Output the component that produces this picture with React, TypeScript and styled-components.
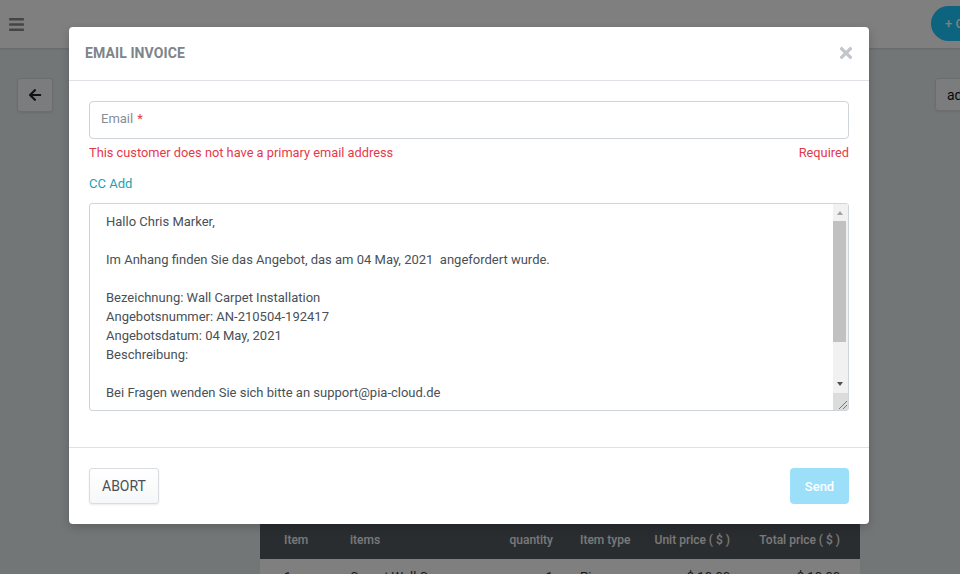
import styled, { createGlobalStyle } from "styled-components";
import { FaArrowLeft, FaBars, FaTimes } from "react-icons/fa";

const GlobalStyle = createGlobalStyle`
  html, body {
    margin: 0;
    padding: 0;
  }
  body {
    font-family: Roboto, "Liberation Sans", Arial, sans-serif;
    background: #e6ecee;
  }
  * {
    box-sizing: border-box;
  }
`;

const Page = styled.div`
  position: relative;
  width: 960px;
  height: 574px;
  overflow: hidden;
  background: #e6ecee;
`;

const TopBar = styled.header`
  display: flex;
  align-items: center;
  justify-content: space-between;
  height: 48px;
  padding: 0 0 0 8px;
  background: #ffffff;
  box-shadow: 0 1px 2px rgba(0, 0, 0, 0.12);
  color: #8a8a8a;
  font-size: 17px;
`;

const CreateButton = styled.button`
  height: 35px;
  width: 120px;
  margin-right: -91px;
  margin-top: -1px;
  border: none;
  border-radius: 18px;
  background: #1ac9ff;
  color: #fff;
  font-family: inherit;
  font-size: 13px;
  font-weight: 500;
  text-align: left;
  padding-left: 14px;
`;

const Content = styled.div`
  display: flex;
  padding: 30px 0 0 17px;
`;

const SquareButton = styled.button`
  display: flex;
  align-items: center;
  justify-content: center;
  width: 36px;
  height: 34px;
  border: 1px solid #d6dadd;
  border-radius: 3px;
  background: #f7f9fa;
  color: #1e2327;
  font-size: 14px;
  font-family: inherit;
  box-shadow: 0 1px 2px rgba(0, 0, 0, 0.08);
  flex-shrink: 0;
`;

const AddButton = styled(SquareButton)`
  width: 110px;
  height: 33px;
  justify-content: flex-start;
  padding-left: 11px;
  font-size: 14px;
  margin-left: 75px;
  color: #111;
`;

const Main = styled.main`
  flex-shrink: 0;
  margin-left: 207px;
  width: 600px;
  padding-top: 445px;
`;

const Table = styled.table`
  width: 600px;
  table-layout: fixed;
  border-collapse: collapse;
  font-size: 12px;
`;

type CellProps = { $align?: string; $w: number; $pl?: number; $pr?: number };

const HeadCell = styled.th<CellProps>`
  width: ${(p) => p.$w}px;
  height: 36px;
  padding: 0 ${(p) => p.$pr || 0}px 2px ${(p) => p.$pl || 0}px;
  background: #545a60;
  color: #f2f2f2;
  font-weight: 500;
  text-align: ${(p) => p.$align || "left"};
  white-space: nowrap;
`;

const BodyCell = styled.td<CellProps>`
  padding: 10px ${(p) => p.$pr || 0}px 10px ${(p) => p.$pl || 0}px;
  background: #ffffff;
  color: #333;
  font-size: 13px;
  text-align: ${(p) => p.$align || "left"};
  white-space: nowrap;
  overflow: hidden;
`;

const Overlay = styled.div`
  position: absolute;
  inset: 0;
  background: rgba(0, 0, 0, 0.5);
  padding: 27px 0 0 69px;
`;

const Modal = styled.div`
  width: 800px;
  background: #fff;
  border-radius: 4px;
  box-shadow: 0 3px 10px rgba(0, 0, 0, 0.2);
`;

const ModalHeader = styled.div`
  display: flex;
  align-items: center;
  justify-content: space-between;
  height: 54px;
  padding: 0 16px 1px;
  border-bottom: 1px solid #dee2e6;
`;

const Title = styled.h5`
  margin: 0;
  font-size: 14px;
  font-weight: 700;
  color: #7d848b;
  letter-spacing: 0.1px;
`;

const CloseButton = styled.button`
  display: flex;
  padding: 0;
  margin-right: -2px;
  border: none;
  background: none;
  color: #c2c6ca;
  font-size: 18px;
`;

const ModalBody = styled.div`
  padding: 20px 20px 36px;
`;

const EmailInput = styled.div`
  display: flex;
  align-items: center;
  height: 38px;
  padding: 0 11px 3px;
  border: 1px solid #ced4da;
  border-radius: 4px;
  font-size: 13px;
  color: #868e96;
`;

const Star = styled.span`
  color: #e5394b;
  margin-left: 4px;
`;

const ErrorRow = styled.div`
  display: flex;
  justify-content: space-between;
  margin-top: 5px;
  font-size: 12.8px;
  line-height: 18px;
  color: #e5394b;
`;

const LinkText = styled.a`
  display: inline-block;
  margin-top: 13px;
  font-size: 13px;
  line-height: 18px;
  color: #17a2b8;
  text-decoration: none;
`;

const MessageWrap = styled.div`
  position: relative;
  margin-top: 10px;
`;

const Message = styled.textarea`
  display: block;
  width: 100%;
  height: 208px;
  padding: 8px 32px 8px 16px;
  border: 1px solid #ced4da;
  border-radius: 3px;
  font-family: inherit;
  font-size: 13px;
  line-height: 19px;
  color: #495057;
  resize: none;
  overflow: hidden;
  outline: none;
`;

/* drawn scrollbar laid over the textarea's right edge */
const ScrollBar = styled.div`
  position: absolute;
  top: 1px;
  right: 1px;
  bottom: 1px;
  width: 15px;
  display: flex;
  flex-direction: column;
  background: #f1f1f1;
`;

const Arrow = styled.div<{ $down?: boolean }>`
  position: relative;
  height: 17px;
  flex-shrink: 0;

  &::after {
    content: "";
    position: absolute;
    left: 4px;
    top: ${(p) => (p.$down ? "6px" : "7px")};
    border-left: 3.5px solid transparent;
    border-right: 3.5px solid transparent;
    ${(p) =>
      p.$down
        ? "border-top: 4px solid #505050;"
        : "border-bottom: 4px solid #a3a3a3;"}
  }
`;

const Track = styled.div`
  flex: 1;
`;

const Thumb = styled.div`
  width: 13px;
  height: 121px;
  background: #c1c1c1;
`;

const Corner = styled.div`
  display: flex;
  align-items: flex-end;
  justify-content: flex-end;
  height: 17px;
  flex-shrink: 0;
  background: #dcdcdc;
`;

const ModalFooter = styled.div`
  display: flex;
  justify-content: space-between;
  align-items: center;
  padding: 20px;
  border-top: 1px solid #dee2e6;
`;

const AbortButton = styled.button`
  height: 36px;
  padding: 0 12px;
  border: 1px solid #d9dde1;
  border-radius: 3px;
  background: linear-gradient(#ffffff, #f6f7f8);
  box-shadow: 0 1px 2px rgba(0, 0, 0, 0.08);
  font-family: inherit;
  font-size: 14px;
  color: #495057;
`;

const SendButton = styled.button`
  height: 36px;
  width: 59px;
  border: none;
  border-radius: 4px;
  background: #9bdff8;
  font-family: inherit;
  font-size: 13px;
  font-weight: 500;
  color: #fff;
`;

const body = `Hallo Chris Marker,

Im Anhang finden Sie das Angebot, das am 04 May, 2021  angefordert wurde.

Bezeichnung: Wall Carpet Installation
Angebotsnummer: AN-210504-192417
Angebotsdatum: 04 May, 2021
Beschreibung:

Bei Fragen wenden Sie sich bitte an support@pia-cloud.de

Mit freundlichen Grüßen
Ihr PIA Cloud Team
`;

const columns = [
  { label: "Item", align: "left", w: 90, pl: 24 },
  { label: "items", align: "left", w: 150 },
  { label: "quantity", align: "right", w: 53 },
  { label: "Item type", align: "left", w: 87, pl: 27 },
  { label: "Unit price ( $ )", align: "right", w: 90 },
  { label: "Total price ( $ )", align: "right", w: 130, pr: 20 },
];

const row = ["1", "Carpet Wall Cover", "1", "Piece", "$ 10.00", "$ 10.00"];

export default function App() {
  return (
    <>
      <GlobalStyle />
      <Page>
        <TopBar>
          <FaBars />
          <CreateButton>+ Create</CreateButton>
        </TopBar>
        <Content>
          <SquareButton>
            <FaArrowLeft />
          </SquareButton>
          <Main>
            <Table>
              <thead>
                <tr>
                  {columns.map((c) => (
                    <HeadCell key={c.label} $align={c.align} $w={c.w} $pl={c.pl} $pr={c.pr}>
                      {c.label}
                    </HeadCell>
                  ))}
                </tr>
              </thead>
              <tbody>
                <tr>
                  {row.map((v, i) => (
                    <BodyCell
                      key={i}
                      $align={columns[i].align}
                      $w={columns[i].w}
                      $pl={columns[i].pl}
                      $pr={columns[i].pr}
                    >
                      {v}
                    </BodyCell>
                  ))}
                </tr>
              </tbody>
            </Table>
          </Main>
          <AddButton>add Position</AddButton>
        </Content>

        <Overlay>
          <Modal>
            <ModalHeader>
              <Title>EMAIL INVOICE</Title>
              <CloseButton>
                <FaTimes />
              </CloseButton>
            </ModalHeader>
            <ModalBody>
              <EmailInput>
                Email<Star>*</Star>
              </EmailInput>
              <ErrorRow>
                <span>This customer does not have a primary email address</span>
                <span>Required</span>
              </ErrorRow>
              <LinkText href="#">CC Add</LinkText>
              <MessageWrap>
                <Message defaultValue={body} />
                <ScrollBar>
                  <Arrow />
                  <Track>
                    <Thumb />
                  </Track>
                  <Arrow $down />
                  <Corner>
                    <svg width="12" height="12" viewBox="0 0 12 12">
                      <path d="M11 3 L3 11 M11 7 L7 11" stroke="#777" strokeWidth="1" />
                    </svg>
                  </Corner>
                </ScrollBar>
              </MessageWrap>
            </ModalBody>
            <ModalFooter>
              <AbortButton>ABORT</AbortButton>
              <SendButton>Send</SendButton>
            </ModalFooter>
          </Modal>
        </Overlay>
      </Page>
    </>
  );
}
